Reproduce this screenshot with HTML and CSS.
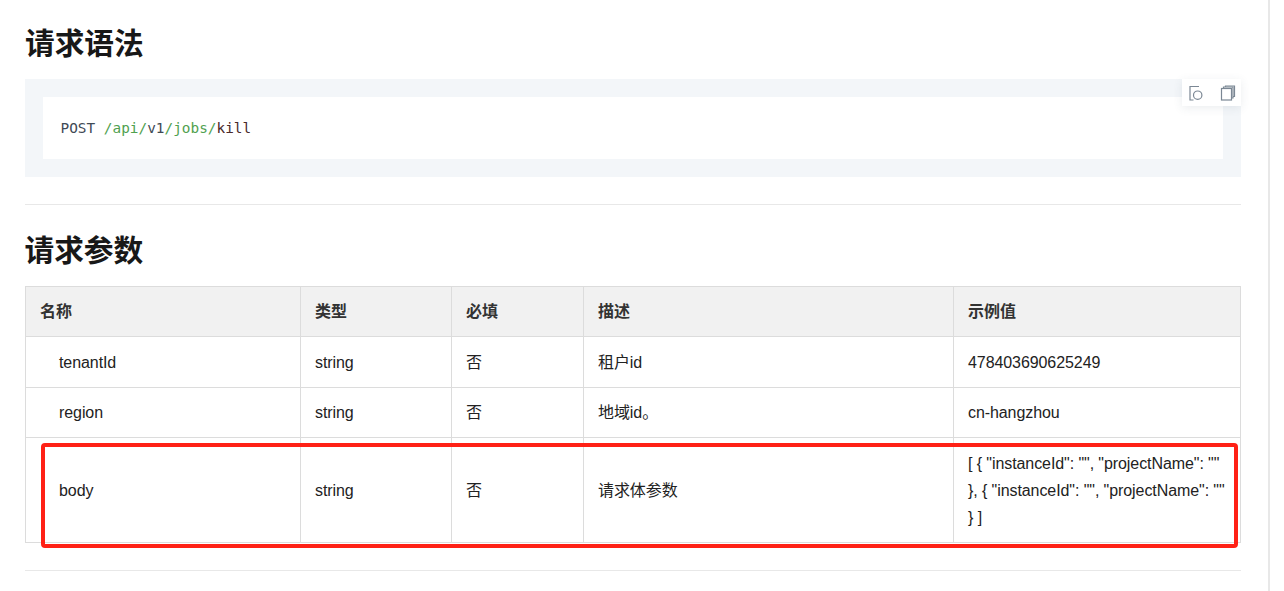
FILE: index.html
```html
<!DOCTYPE html>
<html lang="zh-CN">
<head>
<meta charset="utf-8">
<title>请求语法</title>
<link rel="stylesheet" href="styles.css">
</head>
<body>
<div class="layout">
  <main class="doc">
    <h2 class="title title-first">请求语法</h2>
    <div class="code-block">
      <div class="code-tools">
        <svg class="tool" width="20" height="20" viewBox="0 0 20 20" fill="none"><path d="M13 3.5H4V17H7.5"/><circle cx="11.7" cy="12.2" r="4.2"/></svg>
        <svg class="tool" width="20" height="20" viewBox="0 0 20 20" fill="none"><rect x="3.5" y="5.5" width="10" height="11.5"/><path d="M5.5 5.5V4H15V15H13.5"/><path d="M7.5 4V3H16.5V13.5H15"/></svg>
      </div>
      <pre class="code"><span>POST </span><span class="g">/api/</span><span>v1</span><span class="g">/jobs/</span><span class="k">kill</span></pre>
    </div>
    <hr class="rule rule-a">
    <h2 class="title title-second">请求参数</h2>
    <div class="table-wrap">
      <table class="params">
        <colgroup><col class="c1"><col class="c2"><col class="c3"><col class="c4"><col class="c5"></colgroup>
        <thead>
          <tr class="h50"><th>名称</th><th>类型</th><th>必填</th><th>描述</th><th>示例值</th></tr>
        </thead>
        <tbody>
          <tr class="h51"><td><span class="ind">tenantId</span></td><td>string</td><td>否</td><td>租户id</td><td>478403690625249</td></tr>
          <tr class="h50"><td><span class="ind">region</span></td><td>string</td><td>否</td><td>地域id。</td><td>cn-hangzhou</td></tr>
          <tr><td><span class="ind">body</span></td><td>string</td><td>否</td><td>请求体参数</td><td class="tall">[ { "instanceId": "", "projectName": "" }, { "instanceId": "", "projectName": "" } ]</td></tr>
        </tbody>
      </table>
      <div class="highlight"></div>
    </div>
    <hr class="rule rule-b">
  </main>
  <div class="rail"></div>
</div>
</body>
</html>
```
FILE: styles.css
```css
* { box-sizing: border-box; }
html, body { margin: 0; height: 100%; overflow: hidden; background: #fff; }
body { font-family: "Liberation Sans", "Noto Sans CJK SC", sans-serif; font-size: 16px; color: #222; }
.layout { display: flex; height: 591px; }
.doc { width: 1241px; padding-left: 25px; flex: none; }
.rail { width: 2px; margin-left: 27px; background: #e8e8e8; flex: none; }
.title { margin: 0; font-size: 29.7px; line-height: 40px; font-weight: 700; color: #181818; }
.title-first { padding-top: 24px; height: 79px; }
.title-second { text-indent: -0.5px; }
.code-block { position: relative; height: 98px; padding: 18px; background: #f3f6f9; }
.code { margin: 0; height: 62px; padding: 0 17.5px; background: #fff; font-family: "DejaVu Sans Mono", monospace; font-size: 14.4px; line-height: 62px; color: #3f4a55; }
.code .g { color: #50a14f; }
.code .k { color: #4a2a2a; }
.code-tools { position: absolute; top: 0; right: 0; width: 59px; height: 27px; display: flex; align-items: center; gap: 12px; padding-left: 4px; background: #fff; box-shadow: 0 2px 10px rgba(60, 80, 100, 0.1); }
.tool { flex: none; stroke: #7b8794; stroke-width: 1.2; }
.rule { margin: 0; border: 0; height: 1px; background: #e8e8e8; }
.rule-a { margin-top: 27px; margin-bottom: 26px; }
.rule-b { margin-top: 27px; }
.table-wrap { position: relative; margin-top: 15px; }
.params { width: 1215px; border-collapse: collapse; table-layout: fixed; }
.c1 { width: 275px; } .c2 { width: 151px; } .c3 { width: 132px; } .c4 { width: 370px; } .c5 { width: 287px; }
.params th, .params td { border: 1px solid #dcdcdc; padding: 0 14px; line-height: 27px; text-align: left; vertical-align: middle; }
.params td { letter-spacing: -0.08px; }
.params th { background: #f1f1f1; font-weight: 600; color: #333; }
.h50 { height: 50px; }
.h51 { height: 51px; }
.params td.tall { padding-top: 12px; padding-bottom: 11px; }
.ind { padding-left: 19px; }
.highlight { position: absolute; left: 16px; top: 157px; width: 1197px; height: 105px; border: 4px solid #ff2116; border-radius: 4px; pointer-events: none; }
```
